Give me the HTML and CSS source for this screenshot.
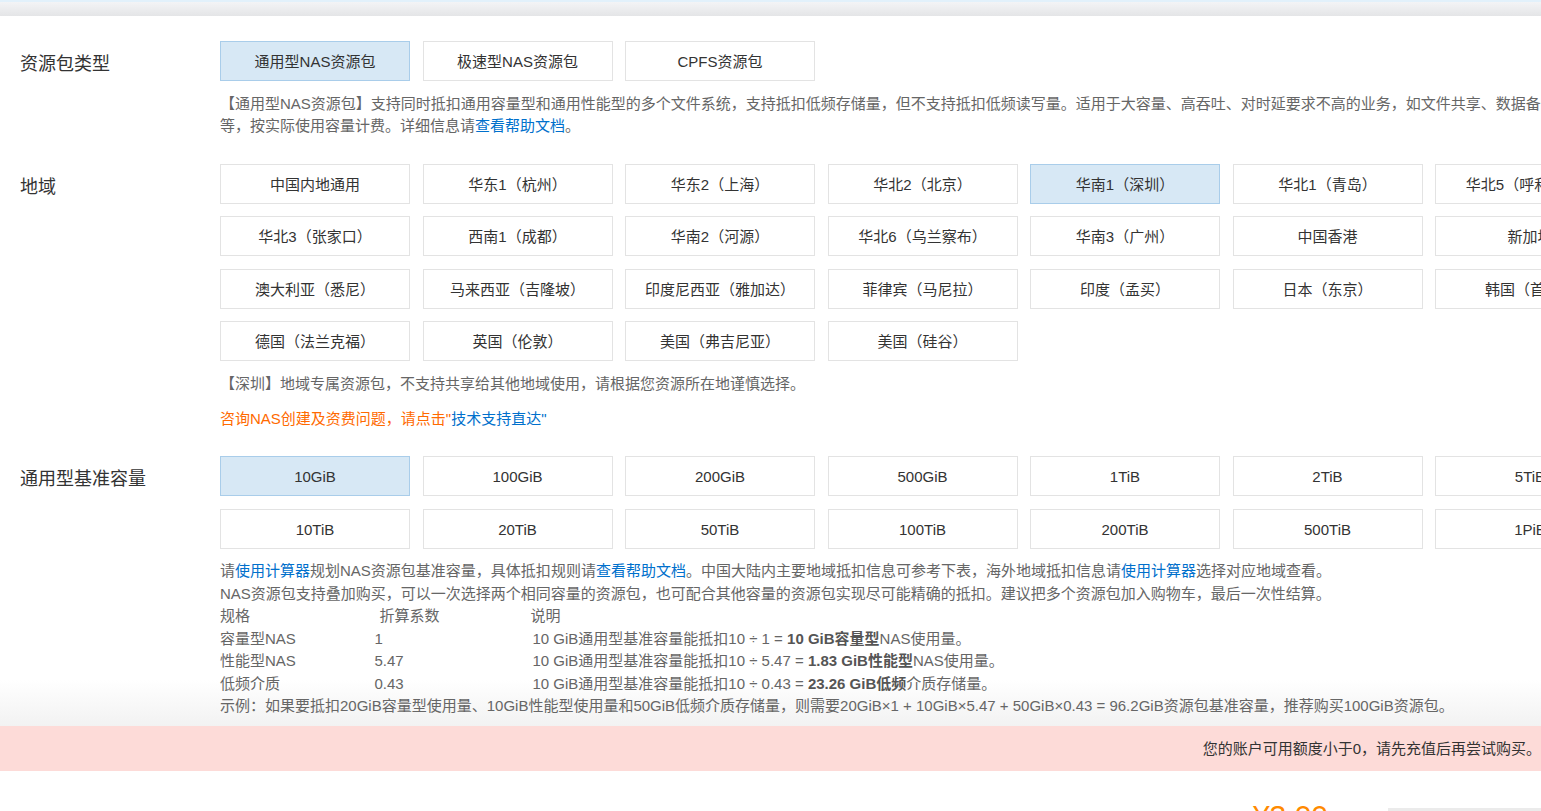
FILE: index.html
```html
<!DOCTYPE html>
<html lang="zh-CN">
<head>
  <meta charset="UTF-8">
  <title>NAS资源包</title>
  <link rel="stylesheet" href="styles.css">
</head>
<body>
  <div class="page">
    <div class="topbar"></div>

    <div class="form">
      <div class="section">
        <div class="label">资源包类型</div>
        <div class="content">
          <div class="options">
            <div class="opt active">通用型NAS资源包</div>
            <div class="opt">极速型NAS资源包</div>
            <div class="opt">CPFS资源包</div>
          </div>
          <p class="desc wrap-desc">【通用型NAS资源包】支持同时抵扣通用容量型和通用性能型的多个文件系统，支持抵扣低频存储量，但不支持抵扣低频读写量。适用于大容量、高吞吐、对时延要求不高的业务，如文件共享、数据备份等，按实际使用容量计费。详细信息请<a href="#">查看帮助文档</a>。</p>
        </div>
      </div>

      <div class="section">
        <div class="label">地域</div>
        <div class="content">
          <div class="options">
            <div class="opt">中国内地通用</div>
            <div class="opt">华东1（杭州）</div>
            <div class="opt">华东2（上海）</div>
            <div class="opt">华北2（北京）</div>
            <div class="opt active">华南1（深圳）</div>
            <div class="opt">华北1（青岛）</div>
            <div class="opt">华北5（呼和浩特）</div>
            <div class="opt">华北3（张家口）</div>
            <div class="opt">西南1（成都）</div>
            <div class="opt">华南2（河源）</div>
            <div class="opt">华北6（乌兰察布）</div>
            <div class="opt">华南3（广州）</div>
            <div class="opt">中国香港</div>
            <div class="opt">新加坡</div>
            <div class="opt">澳大利亚（悉尼）</div>
            <div class="opt">马来西亚（吉隆坡）</div>
            <div class="opt">印度尼西亚（雅加达）</div>
            <div class="opt">菲律宾（马尼拉）</div>
            <div class="opt">印度（孟买）</div>
            <div class="opt">日本（东京）</div>
            <div class="opt">韩国（首尔）</div>
            <div class="opt">德国（法兰克福）</div>
            <div class="opt">英国（伦敦）</div>
            <div class="opt">美国（弗吉尼亚）</div>
            <div class="opt">美国（硅谷）</div>
          </div>
          <p class="desc">【深圳】地域专属资源包，不支持共享给其他地域使用，请根据您资源所在地谨慎选择。</p>
          <p class="tip">咨询NAS创建及资费问题，请点击"<a href="#">技术支持直达"</a></p>
        </div>
      </div>

      <div class="section">
        <div class="label">通用型基准容量</div>
        <div class="content">
          <div class="options">
            <div class="opt active">10GiB</div>
            <div class="opt">100GiB</div>
            <div class="opt">200GiB</div>
            <div class="opt">500GiB</div>
            <div class="opt">1TiB</div>
            <div class="opt">2TiB</div>
            <div class="opt">5TiB</div>
            <div class="opt">10TiB</div>
            <div class="opt">20TiB</div>
            <div class="opt">50TiB</div>
            <div class="opt">100TiB</div>
            <div class="opt">200TiB</div>
            <div class="opt">500TiB</div>
            <div class="opt">1PiB</div>
          </div>
          <div class="desc">
            <div>请<a href="#">使用计算器</a>规划NAS资源包基准容量，具体抵扣规则请<a href="#">查看帮助文档</a>。中国大陆内主要地域抵扣信息可参考下表，海外地域抵扣信息请<a href="#">使用计算器</a>选择对应地域查看。</div>
            <div>NAS资源包支持叠加购买，可以一次选择两个相同容量的资源包，也可配合其他容量的资源包实现尽可能精确的抵扣。建议把多个资源包加入购物车，最后一次性结算。</div>
            <table class="ratio">
              <tr>
                <th class="c-spec">规格</th>
                <th class="c-factor">折算系数</th>
                <th>说明</th>
              </tr>
              <tr>
                <td>容量型NAS</td>
                <td>1</td>
                <td class="c-note">10 GiB通用型基准容量能抵扣10 ÷ 1 = <b>10 GiB容量型</b>NAS使用量。</td>
              </tr>
              <tr>
                <td>性能型NAS</td>
                <td>5.47</td>
                <td class="c-note">10 GiB通用型基准容量能抵扣10 ÷ 5.47 = <b>1.83 GiB性能型</b>NAS使用量。</td>
              </tr>
              <tr>
                <td>低频介质</td>
                <td>0.43</td>
                <td class="c-note">10 GiB通用型基准容量能抵扣10 ÷ 0.43 = <b>23.26 GiB低频</b>介质存储量。</td>
              </tr>
            </table>
            <div>示例：如果要抵扣20GiB容量型使用量、10GiB性能型使用量和50GiB低频介质存储量，则需要20GiB×1 + 10GiB×5.47 + 50GiB×0.43 = 96.2GiB资源包基准容量，推荐购买100GiB资源包。</div>
          </div>
        </div>
      </div>
    </div>

    <div class="buy-bar">
      <div class="fade"></div>
      <div class="warn">您的账户可用额度小于0，请先充值后再尝试购买。</div>
      <div class="total">
        <span class="price">¥3.00</span>
        <span class="buy-btn"></span>
      </div>
    </div>
  </div>
</body>
</html>
```

FILE: styles.css
```css
body {
  margin: 0;
  background: #fff;
  font-family: "Liberation Sans", "Noto Sans CJK SC", sans-serif;
  font-size: 15px;
  line-height: 22.5px;
  color: #333;
}

a {
  color: #0070cc;
  text-decoration: none;
}

.page {
  overflow: hidden;
}

.topbar {
  height: 14px;
  border-top: 2px solid #e2f1fb;
  background: linear-gradient(#f3f4f6, #e4e5e7);
}

.form {
  padding: 25px 0 8.5px;
}

.section {
  display: flex;
  margin-bottom: 26px;
}

.section:last-child {
  margin-bottom: 0;
}

.label {
  flex: none;
  width: 200px;
  padding-left: 20px;
  font-size: 18px;
  line-height: 47px;
  color: #333;
}

.content {
  flex: none;
}

.options {
  display: grid;
  grid-template-columns: repeat(7, 190px);
  gap: 12.5px;
}

.opt {
  height: 38px;
  line-height: 39px;
  border: 1px solid #e3e3e3;
  text-align: center;
  color: #333;
  white-space: nowrap;
  cursor: pointer;
}

.opt.active {
  background: #d7e8f5;
  border-color: #a9cdea;
}

.desc {
  margin: 11.5px 0 0;
  color: #666;
}

.wrap-desc {
  width: 1350px;
}

.tip {
  margin: 12.5px 0 0;
  color: #ff6a00;
}

.ratio {
  border-collapse: collapse;
}

.ratio th,
.ratio td {
  padding: 0;
  text-align: left;
  font-weight: normal;
  white-space: nowrap;
  color: #666;
}

.ratio .c-spec {
  width: 154.5px;
}

.ratio .c-factor {
  width: 151px;
  padding-left: 5px;
}

.ratio .c-note {
  padding-left: 2px;
}

.ratio b {
  color: #555;
}

.fade {
  height: 46px;
  margin-top: -46px;
  background: linear-gradient(rgba(242, 242, 242, 0), #f2f2f2);
}

.warn {
  height: 45px;
  line-height: 45px;
  background: #fddbd8;
  text-align: right;
  color: #333;
  white-space: nowrap;
}

.total {
  display: flex;
  justify-content: flex-end;
  align-items: flex-start;
  padding-top: 30px;
  height: 60px;
}

.price {
  font-size: 30px;
  line-height: 30px;
  color: #ff8a00;
}

.buy-btn {
  width: 153px;
  height: 40px;
  margin: 7px 0 0 60px;
  background: #ebebeb;
}
```
